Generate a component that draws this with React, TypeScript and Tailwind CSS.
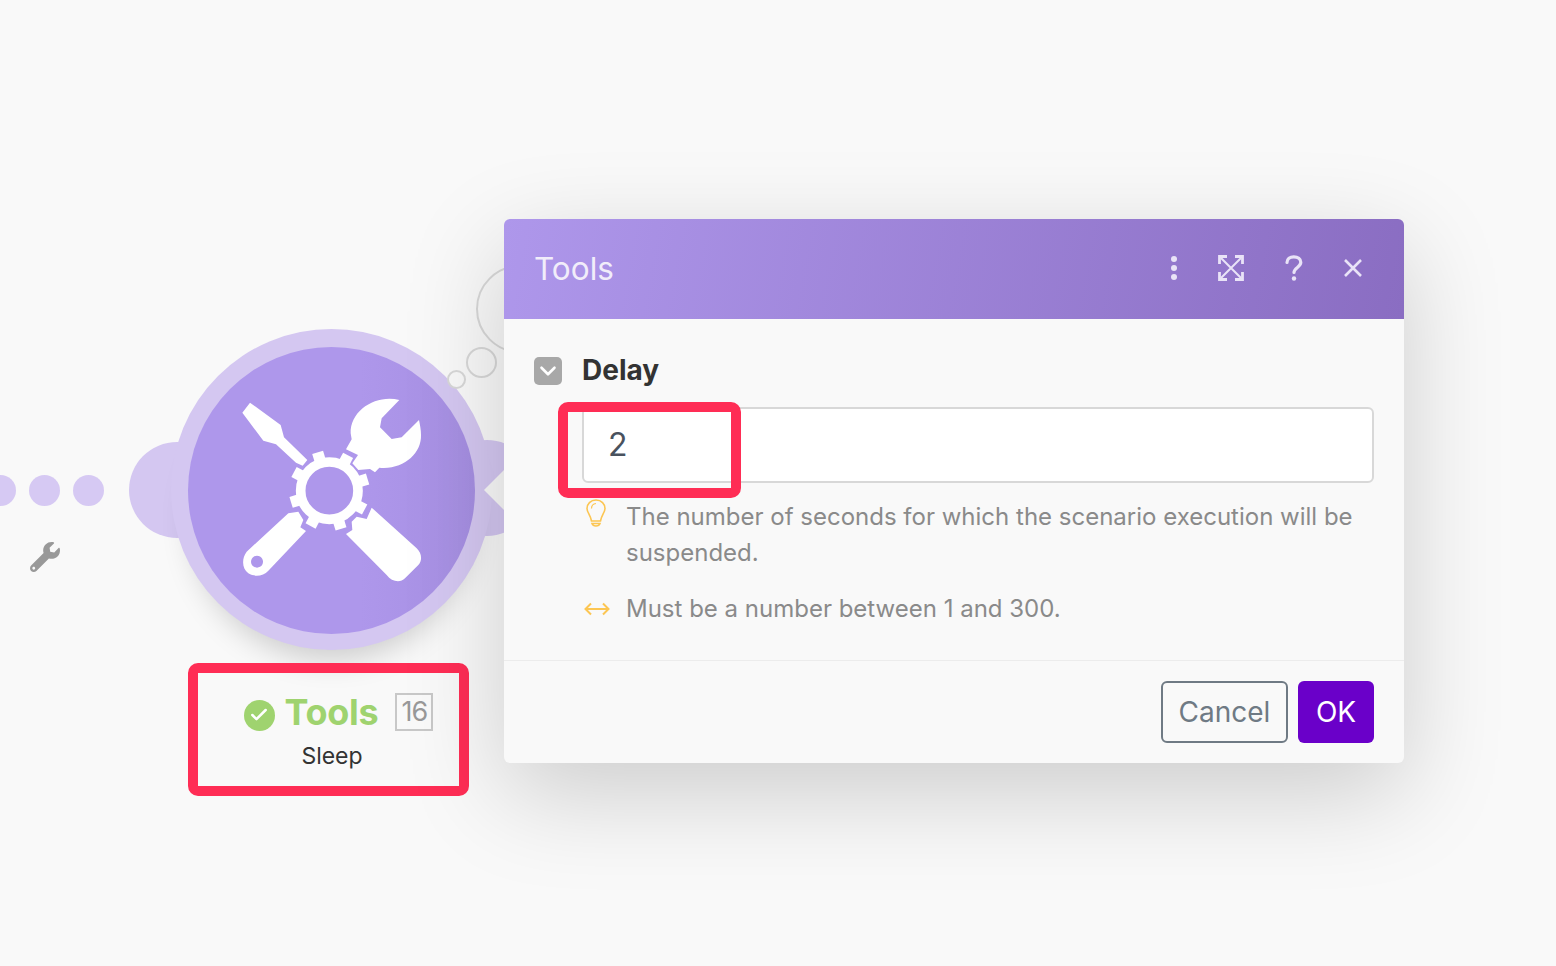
import React from 'react';
import { Check, ChevronDown } from 'lucide-react';
import { FaWrench } from 'react-icons/fa';

const font = { fontFamily: 'Inter, "Liberation Sans", sans-serif' };

function ToolsGlyph() {
  const teeth = [-17, 28, 73, 118, 163, 208, 253, 298];
  return (
    <svg viewBox="0 0 1200 1020" className="absolute left-[120px] top-[320px] h-[340px] w-[400px]">
      <g fill="#ffffff">
        <path d="M390,248 L367,278 L430,362 L468,373 L528,428 L548,437 L562,420 L492,352 L482,315 Z" />
        <path d="M838,240 C770,222 690,270 692,340 L695,358 L678,388 L714,405 L697,430 L715,450 L750,447 L765,457 L778,443 C850,450 905,400 903,345 C903,330 900,315 897,300 L845,352 L815,357 L780,322 L785,295 Z" />
        <path
          fillRule="evenodd"
          d="M505,580 L380,695 C365,715 365,745 385,760 C405,772 430,768 445,752 L558,633 L541,622 L550,600 L535,575 Z M411,707 a18,18 0 1,0 0.1,0 Z"
        />
        <path d="M755,563 L740,597 L710,590 L695,605 L697,630 L678,642 L800,765 C815,785 840,790 855,775 L895,735 C908,720 905,700 890,685 Z" />
        {teeth.map((a) => (
          <rect key={a} x="611" y="392" width="34" height="32" transform={`rotate(${a} 628 512)`} />
        ))}
      </g>
      <circle cx="628" cy="512" r="86" fill="none" stroke="#ffffff" strokeWidth="29" />
    </svg>
  );
}

function ExpandIcon() {
  return (
    <svg viewBox="0 0 26 26" className="h-[26px] w-[26px]" fill="none" stroke="#e9e3f7" strokeWidth="2.8">
      <path d="M1.500 9V1.500H9M17 1.500h7.500V9M24.500 17v7.500H17M9 24.500H1.500V17" />
      <path d="M3 3l20 20M23 3L3 23" strokeWidth="2" />
    </svg>
  );
}

function HeaderIcons() {
  return (
    <div className="flex items-center pb-[3px]">
      <svg viewBox="0 0 8 28" className="mr-[40px] h-[28px] w-[8px]" fill="#e9e3f7">
        <circle cx="4" cy="5" r="3" />
        <circle cx="4" cy="14" r="3" />
        <circle cx="4" cy="23" r="3" />
      </svg>
      <ExpandIcon />
      <svg viewBox="0 0 18 26" className="ml-[41px] h-[26px] w-[18px]" fill="none" stroke="#e9e3f7" strokeWidth="3.200" strokeLinecap="round">
        <path d="M2 7.500C2 3.800 5 1.800 8.800 1.800c4 0 7 2.300 7 5.500 0 5-6.800 5.200-6.800 10.200" />
        <circle cx="9" cy="23.500" r="2.200" fill="#e9e3f7" stroke="none" />
      </svg>
      <svg viewBox="0 0 20 20" className="ml-[40px] h-[20px] w-[20px]" fill="none" stroke="#e9e3f7" strokeWidth="2.600">
        <path d="M2 2l16 16M18 2L2 18" />
      </svg>
    </div>
  );
}

function BulbIcon() {
  return (
    <svg viewBox="0 0 20 28" className="ml-[2px] h-[28px] w-[20px] shrink-0" fill="none" stroke="#fcc653" strokeWidth="1.600">
      <path d="M10 1C4.500 1 1 5 1 9.500c0 4 3.500 6.500 4.500 12.500h9c1-6 4.500-8.500 4.500-12.500C19 5 15.500 1 10 1Z" />
      <path d="M5.500 9.500C5.500 6.800 7.300 4.800 10 4.500" strokeWidth="1.200" />
      <path d="M6 24.500h8c-.5 1.500-1.800 2.500-4 2.500s-3.500-1-4-2.500Z" />
    </svg>
  );
}

function ArrowsIcon() {
  return (
    <svg viewBox="0 0 26 14" className="h-[14px] w-[26px]" fill="none" stroke="#fcc653" strokeWidth="2">
      <path d="M1 7h24M7 1.500L1.500 7 7 12.500M19 1.500L24.500 7 19 12.500" />
    </svg>
  );
}

export default function App() {
  return (
    <div className="relative h-[966px] w-[1556px] overflow-hidden bg-[#f9f9f9]" style={font}>
      {/* dots leading into the module */}
      <div className="absolute left-[-15px] top-[475px] flex gap-[13px]">
        <div className="h-[31px] w-[31px] rounded-full bg-[#d6c9f3]" />
        <div className="h-[31px] w-[31px] rounded-full bg-[#d6c9f3]" />
        <div className="h-[31px] w-[31px] rounded-full bg-[#d6c9f3]" />
      </div>
      <FaWrench className="absolute left-[30px] top-[542px] h-[30px] w-[30px] text-[#999999]" />

      {/* thought bubbles */}
      <div className="absolute left-[476px] top-[265px] h-[88px] w-[88px] rounded-full border-2 border-[#d8d8d8]" />
      <div className="absolute left-[466px] top-[347px] h-[31px] w-[31px] rounded-full border-2 border-[#d8d8d8]" />

      {/* module */}
      <div className="absolute left-[129px] top-[442px] h-[96px] w-[96px] rounded-full bg-[#d4c7f1]" />
      <div className="absolute left-[439px] top-[440px] h-[96px] w-[96px] rounded-full bg-[#d4c7f1]" />
      <div className="absolute left-[171px] top-[329px] h-[321px] w-[321px] rounded-full bg-[#d4c7f1] shadow-[0_30px_30px_-20px_rgba(0,0,0,0.18)]" />
      <div className="absolute left-[188px] top-[347px] h-[287px] w-[287px] rounded-full bg-[linear-gradient(90deg,#ae97eb_0%,#ae97eb_60%,#a68fe2_100%)]" />
      <div className="absolute left-[447px] top-[370px] h-[19px] w-[19px] rounded-full border-2 border-[#d8d8d8] bg-[#f9f9f9]" />
      <div className="absolute left-[484px] top-[470px] h-[40px] w-[20px] bg-[#f9f9f9] [clip-path:polygon(100%_0,100%_100%,0_50%)]" />
      <ToolsGlyph />

      {/* module label */}
      <div className="absolute left-[188px] top-[663px] flex h-[133px] w-[281px] flex-col items-center rounded-[10px] border-[10px] border-[#ff2d55] pl-[7px]">
        <div className="mt-[17px] flex items-center pl-[13px]">
          <div className="mt-[6px] flex h-[31px] w-[31px] items-center justify-center rounded-full bg-[#9fd36f]">
            <Check className="h-[20px] w-[20px] text-white" strokeWidth={3} />
          </div>
          <span className="ml-[10px] text-[36px] font-bold leading-[44px] tracking-[-0.3px] text-[#9fd36f]">Tools</span>
          <span className="ml-[17px] flex h-[38px] w-[38px] items-center justify-center border-2 border-[#c8c8c8] text-[27px] tracking-[-1px] text-[#999999]">
            16
          </span>
        </div>
        <span className="mt-[7px] text-[23px] leading-[30px] text-[#333333]">Sleep</span>
      </div>

      {/* dialog */}
      <div className="absolute left-[504px] top-[219px] flex h-[544px] w-[900px] flex-col overflow-hidden rounded-[6px] bg-[#f9f9f9] shadow-[0_30px_100px_rgba(0,0,0,0.18)]">
        <div className="flex h-[100px] shrink-0 items-center justify-between bg-[linear-gradient(100deg,#ae97eb_0%,#8a6dc2_100%)] pl-[30px] pr-[41px]">
          <span className="text-[31.5px] leading-[40px] text-[#f1edfa]">Tools</span>
          <HeaderIcons />
        </div>
        <div className="flex flex-1 flex-col px-[30px]">
          <div className="mt-[35px] flex items-center">
            <div className="flex h-[28px] w-[28px] items-center justify-center rounded-[5px] bg-[#a8a8a8]">
              <ChevronDown className="h-[26px] w-[26px] text-white" strokeWidth={2.4} />
            </div>
            <span className="ml-[20px] mt-[-2px] text-[28px] font-bold leading-[36px] text-[#333333]">Delay</span>
          </div>
          <div className="ml-[48px] mt-[19px] flex h-[76px] items-center rounded-[6px] border-2 border-[#d8d8d8] bg-white pl-[24px] text-[32px] text-[#49525e]">
            2
          </div>
          <div className="ml-[50px] mt-[16px] flex">
            <BulbIcon />
            <p className="ml-[20px] w-[740px] text-[24px] leading-[36px] text-[#8a8a8a]">
              The number of seconds for which the scenario execution will be suspended.
            </p>
          </div>
          <div className="ml-[50px] mt-[20px] flex items-center">
            <ArrowsIcon />
            <p className="ml-[16px] text-[24px] leading-[36px] text-[#8a8a8a]">Must be a number between 1 and 300.</p>
          </div>
        </div>
        <div className="flex h-[103px] shrink-0 items-center justify-end gap-[10px] border-t border-[#ececec] pr-[30px]">
          <button className="h-[62px] w-[127px] rounded-[6px] border-2 border-[#6f7a84] text-[28px] text-[#6f7a84]">Cancel</button>
          <button className="h-[62px] w-[76px] rounded-[6px] bg-[#6a00c9] text-[28px] text-white">OK</button>
        </div>
      </div>

      {/* highlight on the input */}
      <div className="absolute left-[558px] top-[402px] h-[96px] w-[183px] rounded-[10px] border-[10px] border-[#ff2d55]" />
    </div>
  );
}
